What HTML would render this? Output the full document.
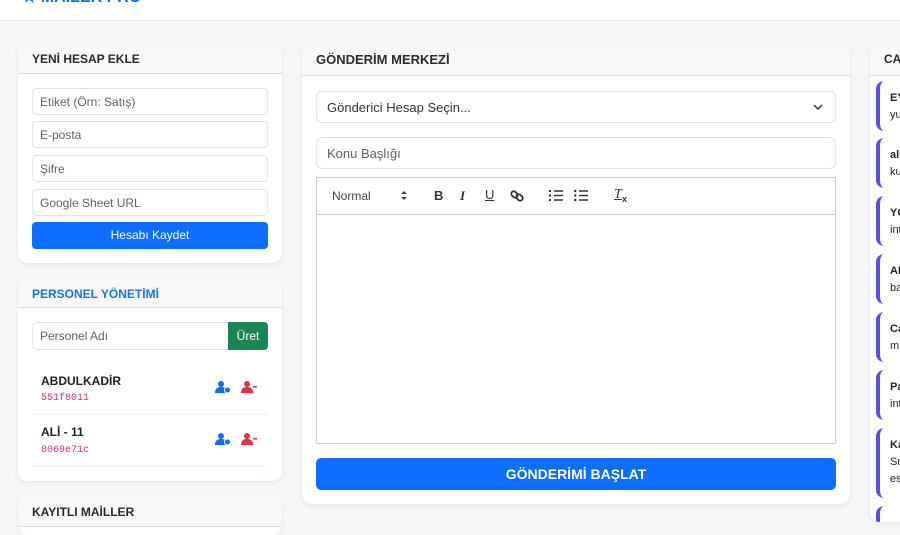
<!DOCTYPE html>
<html><head><meta charset="utf-8"><style>
*{box-sizing:border-box;margin:0;padding:0}
body{width:900px;height:513px;overflow:hidden;background:#f6f7f9;font-family:"Liberation Sans",sans-serif;position:relative;color:#212529}
.top{position:absolute;left:0;top:0;width:900px;height:21px;background:#fff;border-bottom:1px solid #e3e6ea;overflow:hidden}
.top span{position:absolute;left:22px;top:-13px;color:#0d6efd;font-weight:bold;font-size:16px}
.card{position:absolute;background:#fff;border-radius:10px;box-shadow:0 2px 6px rgba(0,0,0,.07);overflow:hidden}
.hd{height:32px;background:#f8f8f8;border-bottom:1px solid #dcdcdc;font-weight:bold;font-size:12px;padding:10px 14px;color:#2b2b2b}
.in{position:absolute;border:1px solid #dee2e6;border-radius:4px;font-size:12px;color:#5f6368;padding:6px 7px;background:#fff}
.btn{position:absolute;background:#0d6efd;color:#fff;border-radius:4px;text-align:center;font-size:12px}
.nm{position:absolute;font-weight:bold;font-size:12px;color:#222}
.cd{position:absolute;font-family:"Liberation Mono",monospace;font-size:10px;color:#d63384}
.ri{position:absolute;left:6px;width:40px;height:50px;border-left:4px solid #5b4ee6;border-radius:8px 0 0 8px;background:#fff;font-size:11px;padding:9px 0 0 10px;line-height:17px}
.tb{position:absolute;color:#333}
</style></head><body>
<div class="top"><span>★ MAILER PRO</span></div>

<div class="card" style="left:18px;top:42px;width:264px;height:221px">
<div class="hd">YENİ HESAP EKLE</div>
<div class="in" style="left:14px;top:46px;width:236px;height:27px">Etiket (Örn: Satış)</div>
<div class="in" style="left:14px;top:79px;width:236px;height:27px">E-posta</div>
<div class="in" style="left:14px;top:113px;width:236px;height:27px">Şifre</div>
<div class="in" style="left:14px;top:147px;width:236px;height:27px">Google Sheet URL</div>
<div class="btn" style="left:14px;top:180px;width:236px;height:27px;line-height:27px">Hesabı Kaydet</div>
</div>

<div class="card" style="left:18px;top:277px;width:264px;height:204px">
<div class="hd" style="color:#1a73e8;height:31px">PERSONEL YÖNETİMİ</div>
<div class="in" style="left:14px;top:45px;width:200px;height:28px;border-radius:4px 0 0 4px">Personel Adı</div>
<div style="position:absolute;left:210px;top:45px;width:40px;height:28px;background:#198754;color:#fff;font-size:12px;line-height:28px;text-align:center;border-radius:0 4px 4px 0">Üret</div>
<div class="nm" style="left:23px;top:97px">ABDULKADİR</div>
<div class="cd" style="left:23px;top:116px">551f8011</div>
<div style="position:absolute;left:14px;top:137px;width:236px;border-top:1px solid #eceef0"></div>
<div class="nm" style="left:23px;top:148px">ALİ - 11</div>
<div class="cd" style="left:23px;top:168px">8069e71c</div>
<div style="position:absolute;left:14px;top:189px;width:236px;border-top:1px solid #eaf2fb"></div>
<svg style="position:absolute;left:197px;top:104px" width="16" height="12"><circle cx="6" cy="3" r="3" fill="#0d6efd"/><path d="M0 12c0-5 3-6 6-6s5 1 6 3v3z" fill="#0d6efd"/><circle cx="12.5" cy="9" r="3" fill="#0d6efd" stroke="#fff"/></svg>
<svg style="position:absolute;left:223px;top:104px" width="16" height="12"><circle cx="6" cy="3" r="3" fill="#dc3545"/><path d="M0 12c0-5 3-6 6-6s6 1 6 6z" fill="#dc3545"/><rect x="12" y="5" width="4" height="1.5" fill="#dc3545"/></svg>
<svg style="position:absolute;left:197px;top:156px" width="16" height="12"><circle cx="6" cy="3" r="3" fill="#0d6efd"/><path d="M0 12c0-5 3-6 6-6s5 1 6 3v3z" fill="#0d6efd"/><circle cx="12.5" cy="9" r="3" fill="#0d6efd" stroke="#fff"/></svg>
<svg style="position:absolute;left:223px;top:156px" width="16" height="12"><circle cx="6" cy="3" r="3" fill="#dc3545"/><path d="M0 12c0-5 3-6 6-6s6 1 6 6z" fill="#dc3545"/><rect x="12" y="5" width="4" height="1.5" fill="#dc3545"/></svg>
</div>

<div class="card" style="left:18px;top:495px;width:264px;height:40px">
<div class="hd">KAYITLI MAİLLER</div></div>

<div class="card" style="left:302px;top:42px;width:548px;height:462px">
<div class="hd" style="height:34px;font-size:13px;padding-top:10px">GÖNDERİM MERKEZİ</div>
<div class="in" style="left:14px;top:49px;width:520px;height:32px;border-radius:6px;font-size:13px;padding:8px 10px;color:#333">Gönderici Hesap Seçin...
<svg style="position:absolute;right:12px;top:11px" width="10" height="8"><path d="M1 2l4 4 4-4" fill="none" stroke="#333" stroke-width="1.5"/></svg></div>
<div class="in" style="left:14px;top:95px;width:520px;height:32px;border-radius:6px;font-size:13px;padding:8px 10px">Konu Başlığı</div>
<div style="position:absolute;left:14px;top:135px;width:520px;height:267px;border:1px solid #ccc"></div>
<div style="position:absolute;left:14px;top:172px;width:520px;border-top:1px solid #ccc"></div>
<div class="tb" style="left:30px;top:147px;font-size:12px;color:#444">Normal</div>
<svg style="position:absolute;left:98px;top:148px" width="8" height="11"><path d="M1 4l3-3 3 3zM1 7l3 3 3-3z" fill="#444"/></svg>
<div class="tb" style="left:132px;top:146px;font-size:13px;font-weight:bold">B</div>
<div class="tb" style="left:158px;top:146px;font-size:13px;font-style:italic;font-weight:bold;font-family:'Liberation Serif'">I</div>
<div class="tb" style="left:183px;top:145px;font-size:13px;text-decoration:underline">U</div>
<svg style="position:absolute;left:208px;top:147px" width="14" height="14"><g fill="none" stroke="#333" stroke-width="1.8"><rect x="1" y="3" width="7" height="5" rx="2.5" transform="rotate(45 4.5 5.5)"/><rect x="6" y="6" width="7" height="5" rx="2.5" transform="rotate(45 9.5 8.5)"/></g></svg>
<svg style="position:absolute;left:247px;top:147px" width="14" height="13"><g stroke="#333" stroke-width="1.4"><path d="M5 2h9M5 6.5h9M5 11h9"/></g><g fill="#333" font-size="4"><rect x="0" y="1" width="2" height="2"/><rect x="0" y="5.5" width="2" height="2"/><rect x="0" y="10" width="2" height="2"/></g></svg>
<svg style="position:absolute;left:272px;top:147px" width="14" height="13"><g stroke="#333" stroke-width="1.4"><path d="M5 2h9M5 6.5h9M5 11h9"/></g><g fill="#333"><circle cx="1.2" cy="2" r="1.2"/><circle cx="1.2" cy="6.5" r="1.2"/><circle cx="1.2" cy="11" r="1.2"/></g></svg>
<div class="tb" style="left:312px;top:145px;font-size:14px;font-style:italic;font-family:'Liberation Serif';text-decoration:underline">T</div>
<div class="tb" style="left:320px;top:152px;font-size:9px;font-weight:bold">x</div>
<div class="btn" style="left:14px;top:416px;width:520px;height:32px;line-height:32px;font-size:14px;font-weight:bold;border-radius:5px">GÖNDERİMİ BAŞLAT</div>
</div>

<div class="card" style="left:870px;top:42px;width:60px;height:480px">
<div class="hd" style="height:34px;padding-left:14px">CAN</div>
<div class="ri" style="top:39px"><b>EY</b><br>yu</div>
<div class="ri" style="top:96px"><b>ali</b><br>ku</div>
<div class="ri" style="top:154px"><b>YO</b><br>int</div>
<div class="ri" style="top:212px"><b>AB</b><br>ba</div>
<div class="ri" style="top:270px"><b>Ca</b><br>m</div>
<div class="ri" style="top:328px"><b>Pa</b><br>int</div>
<div class="ri" style="top:386px;height:70px"><b>Ka</b><br>Su<br>es</div>
<div class="ri" style="top:464px"></div>
</div>
</body></html>
